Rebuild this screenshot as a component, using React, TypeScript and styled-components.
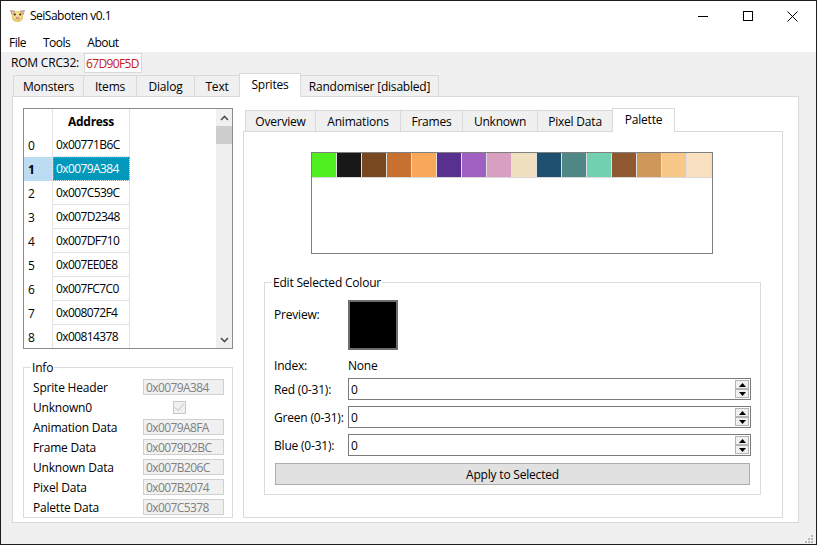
import React from "react";
import styled, { createGlobalStyle } from "styled-components";

const Global = createGlobalStyle`
  html, body { margin: 0; padding: 0; background: #f0f0f0; }
  * { box-sizing: border-box; }
`;

const Win = styled.div`
  position: relative;
  width: 817px; height: 545px; border: 1px solid #1d1d1d; background: #f0f0f0;
  font-family: "Open Sans", "Noto Sans", sans-serif; font-size: 12px; color: #000;
  display: flex; flex-direction: column; overflow: hidden; letter-spacing: -0.2px;
`;
const TitleBar = styled.div`
  height: 30px; background: #fff; display: flex; align-items: center; padding: 0 1px 0 9px; flex: none;
`;
const TitleText = styled.span`margin: -2px 0 0 5px; flex: 1; letter-spacing: -0.5px;`;
const WinBtn = styled.div`width: 45px; height: 30px; display: flex; align-items: center; justify-content: center;`;
const MenuBar = styled.div`
  height: 21px; background: #fff; display: flex; align-items: center; flex: none; padding: 2px 0 0 8px; gap: 17px; letter-spacing: -0.5px;
`;
const RomRow = styled.div`
  height: 21px; display: flex; align-items: flex-end; padding-left: 10px; gap: 5px; flex: none;
`;
const RomLabel = styled.span`line-height: 20px;`;
const RomInput = styled.div`
  width: 58px; height: 20px; background: #fff; border: 1px solid #d9d9d9; color: #c82018; display: flex; align-items: center; padding-left: 1px; letter-spacing: -0.65px;
`;
const TabRow = styled.div<{ $left: number }>`
  display: flex; align-items: flex-end; height: 24px; flex: none; padding-left: ${p => p.$left}px; position: relative; z-index: 1;
`;
const Tab = styled.div<{ $w: number; $active?: boolean }>`
  width: ${p => p.$w}px; height: ${p => (p.$active ? 24 : 22)}px;
  background: ${p => (p.$active ? "#fff" : "#f0f0f0")};
  border: 1px solid #d9d9d9; border-bottom: ${p => (p.$active ? "none" : "1px solid #d9d9d9")};
  margin-right: -1px; display: flex; align-items: center; justify-content: center; flex: none;
  padding-bottom: ${p => (p.$active ? 2 : 0)}px;
`;
const Panel = styled.div`
  margin: -1px 0 0 11px; width: 787px; height: 427px; background: #fff; border: 1px solid #d9d9d9;
  padding: 11px 10px 0 10px; display: flex; gap: 10px; flex: none;
`;
const LeftCol = styled.div`width: 210px; display: flex; flex-direction: column; flex: none;`;
const TableBox = styled.div`
  height: 241px; border: 1px solid #8a8a8a; background: #fff; display: flex; overflow: hidden; flex: none;
`;
const TableGrid = styled.div`
  width: 192px; flex: none; display: grid; grid-template-columns: 29px 77px; grid-auto-rows: 24px;
`;
const HeadCorner = styled.div`border-right: 1px solid #e2e2e2;`;
const HeadCell = styled.div`
  border-right: 1px solid #e2e2e2; font-weight: 700; display: flex; align-items: center; justify-content: center; letter-spacing: -0.3px;
`;
const RowHead = styled.div<{ $sel?: boolean }>`
  background: ${p => (p.$sel ? "#bcdcf4" : "#fff")}; font-weight: ${p => (p.$sel ? 700 : 400)};
  border-right: 1px solid #e2e2e2; display: flex; align-items: center; padding-left: 4px;
`;
const Cell = styled.div<{ $sel?: boolean }>`
  background: ${p => (p.$sel ? "#0099bb" : "#fff")}; color: ${p => (p.$sel ? "#fff" : "#000")};
  border-right: 1px solid #e2e2e2; border-bottom: 1px solid #e2e2e2; display: flex; align-items: center; padding-left: 3px;
  outline: ${p => (p.$sel ? "1px dotted #e8865a" : "none")}; outline-offset: -1px; letter-spacing: -0.6px;
`;
const Scroll = styled.div`
  width: 16px; margin-left: auto; flex: none; background: #f0f0f0; display: flex; flex-direction: column;
`;
const ScrollBtn = styled.div`height: 17px; display: flex; align-items: center; justify-content: center; flex: none;`;
const Thumb = styled.div`height: 18px; background: #cdcdcd; flex: none;`;
const ScrollSpace = styled.div`flex: 1;`;
const Group = styled.div<{ $h: number; $pad: string; $mt: number }>`
  position: relative; height: ${p => p.$h}px; border: 1px solid #dcdcdc; padding: ${p => p.$pad}; margin-top: ${p => p.$mt}px; flex: none;
`;
const Legend = styled.span`
  position: absolute; top: -8px; left: 7px; background: #fff; padding: 0 1px; line-height: 16px;
`;
const InfoRow = styled.div`
  height: 20px; display: grid; grid-template-columns: 110px 81px; align-items: center; padding-left: 9px;
`;
const InfoInput = styled.div`
  width: 81px; height: 16px; background: #f0f0f0; border: 1px solid #d0d0d0; color: #808080; display: flex; align-items: center; padding-left: 2px; letter-spacing: -0.6px;
`;
const CheckHolder = styled.div`display: flex; width: 81px; padding-left: 30px;`;
const Check = styled.div`
  width: 13px; height: 13px; border: 1px solid #c8c8c8; background: #f0f0f0; display: flex; align-items: center; justify-content: center;
`;
const RightCol = styled.div`width: 540px; display: flex; flex-direction: column;`;
const InnerPanel = styled.div`
  margin-top: -1px; width: 540px; height: 387px; border: 1px solid #d9d9d9; background: #fff; padding: 20px 21px 0 20px; flex: none;
`;
const PaletteBox = styled.div`
  width: 402px; height: 102px; margin-left: 47px; border: 1px solid #808080; background: #fff; flex: none;
`;
const SwatchRow = styled.div`display: flex; height: 25px; border-bottom: 1px solid #d9d9d9;`;
const Swatch = styled.div<{ $c: string }>`
  width: 25px; height: 24px; background: ${p => p.$c}; border-right: 1px solid #e0e0e0; flex: none;
`;
const EditRow = styled.div<{ $h: number; $mt?: number }>`
  display: grid; grid-template-columns: 74px 1fr; align-items: center; height: ${p => p.$h}px; padding-left: 9px;
  margin-top: ${p => p.$mt ?? 0}px;
`;
const PreviewSquare = styled.div`width: 50px; height: 50px; background: #000; border: 2px solid #6e6e6e;`;
const PreviewLabel = styled.span`align-self: start; padding-top: 6px;`;
const Spin = styled.div`
  width: 403px; height: 22px; border: 1px solid #7a7a7a; background: #fff; display: flex; align-items: center; padding-left: 2px; justify-content: space-between;
`;
const SpinBtns = styled.div`display: flex; flex-direction: column; width: 14px; height: 18px; margin-right: 1px;`;
const SpinBtn = styled.div`
  height: 9px; border: 1px solid #b4b4b4; background: #f0f0f0; display: flex; align-items: center; justify-content: center;
`;
const ApplyBtn = styled.div`
  margin: 7px 0 0 10px; width: 475px; height: 22px; background: #e1e1e1; border: 1px solid #adadad; display: flex; align-items: center; justify-content: center;
`;
const Grip = styled.svg`position: absolute; right: 2px; bottom: 1px;`;

const UpTri = () => <svg width="7" height="4" viewBox="0 0 7 4"><path d="M3.5 0L7 4H0Z" fill="#000" /></svg>;
const DownTri = () => <svg width="7" height="4" viewBox="0 0 7 4"><path d="M3.5 4L7 0H0Z" fill="#000" /></svg>;

const Pig = () => (
  <svg width="15" height="14" viewBox="0 0 15 14">
    <path d="M0.5 1.5L5 2L2 6Z" fill="#e8b0a8" stroke="#8a7a70" strokeWidth=".5" />
    <path d="M14.5 1.5L10 2L13 6Z" fill="#e8b0a8" stroke="#8a7a70" strokeWidth=".5" />
    <ellipse cx="7.5" cy="7.5" rx="5.7" ry="5.5" fill="#e8c860" />
    <ellipse cx="7.5" cy="7" rx="4.2" ry="3.8" fill="#f6e09a" />
    <circle cx="4.8" cy="5.5" r="1" fill="#2a1a10" />
    <circle cx="10.2" cy="5.5" r="1" fill="#2a1a10" />
    <ellipse cx="7.5" cy="9" rx="2.6" ry="1.8" fill="#eab8a0" />
    <circle cx="6.5" cy="9" r="0.5" fill="#6a4030" />
    <circle cx="8.5" cy="9" r="0.5" fill="#6a4030" />
  </svg>
);

const addrs = ["0x00771B6C", "0x0079A384", "0x007C539C", "0x007D2348", "0x007DF710", "0x007EE0E8", "0x007FC7C0", "0x008072F4", "0x00814378"];
const info: [string, string | null][] = [
  ["Sprite Header", "0x0079A384"], ["Unknown0", null], ["Animation Data", "0x0079A8FA"], ["Frame Data", "0x0079D2BC"],
  ["Unknown Data", "0x007B206C"], ["Pixel Data", "0x007B2074"], ["Palette Data", "0x007C5378"],
];
const palette = ["#50f020", "#181818", "#784820", "#c87030", "#f8a858", "#583090", "#a060c0", "#d8a0c0", "#f0e0c0", "#205070", "#508888", "#70d0b0", "#905830", "#d09858", "#f8c888", "#f8e0c0"];
const mainTabs: [string, number][] = [["Monsters", 71], ["Items", 54], ["Dialog", 59], ["Text", 46]];
const subTabs: [string, number][] = [["Overview", 71], ["Animations", 86], ["Frames", 63], ["Unknown", 76], ["Pixel Data", 76]];

export default function App() {
  return (
    <Win>
      <Global />
      <TitleBar>
        <Pig />
        <TitleText>SeiSaboten v0.1</TitleText>
        <WinBtn><svg width="10" height="10" viewBox="0 0 10 10"><path d="M0 5.5H10" stroke="#000" /></svg></WinBtn>
        <WinBtn><svg width="10" height="10" viewBox="0 0 10 10"><rect x=".5" y=".5" width="9" height="9" fill="none" stroke="#000" /></svg></WinBtn>
        <WinBtn><svg width="11" height="11" viewBox="0 0 11 11"><path d="M.5 .5L10.5 10.5M10.5 .5L.5 10.5" stroke="#000" /></svg></WinBtn>
      </TitleBar>
      <MenuBar><span>File</span><span>Tools</span><span>About</span></MenuBar>
      <RomRow><RomLabel>ROM CRC32:</RomLabel><RomInput>67D90F5D</RomInput></RomRow>
      <TabRow $left={12}>
        {mainTabs.map(([t, w]) => <Tab key={t} $w={w}>{t}</Tab>)}
        <Tab $w={62} $active>Sprites</Tab>
        <Tab $w={139}>Randomiser [disabled]</Tab>
      </TabRow>
      <Panel>
        <LeftCol>
          <TableBox>
            <TableGrid>
              <HeadCorner />
              <HeadCell>Address</HeadCell>
              {addrs.map((a, i) => (
                <React.Fragment key={a}>
                  <RowHead $sel={i === 1}>{i}</RowHead>
                  <Cell $sel={i === 1}>{a}</Cell>
                </React.Fragment>
              ))}
            </TableGrid>
            <Scroll>
              <ScrollBtn><svg width="9" height="6" viewBox="0 0 9 6"><path d="M1 5L4.5 1.5L8 5" fill="none" stroke="#505050" strokeWidth="1.6" /></svg></ScrollBtn>
              <Thumb />
              <ScrollSpace />
              <ScrollBtn><svg width="9" height="6" viewBox="0 0 9 6"><path d="M1 1L4.5 4.5L8 1" fill="none" stroke="#505050" strokeWidth="1.6" /></svg></ScrollBtn>
            </Scroll>
          </TableBox>
          <Group $h={151} $pad="9px 0 0 0" $mt={18}>
            <Legend>Info</Legend>
            {info.map(([l, v]) => (
              <InfoRow key={l}>
                <span>{l}</span>
                {v ? <InfoInput>{v}</InfoInput> : (
                  <CheckHolder><Check><svg width="11" height="9" viewBox="0 0 11 9"><path d="M1 4.5L4 7.5L10 1" fill="none" stroke="#c0c0c0" /></svg></Check></CheckHolder>
                )}
              </InfoRow>
            ))}
          </Group>
        </LeftCol>
        <RightCol>
          <TabRow $left={2}>
            {subTabs.map(([t, w]) => <Tab key={t} $w={w}>{t}</Tab>)}
            <Tab $w={63} $active>Palette</Tab>
          </TabRow>
          <InnerPanel>
            <PaletteBox>
              <SwatchRow>{palette.map((c, i) => <Swatch key={i} $c={c} />)}</SwatchRow>
            </PaletteBox>
            <Group $h={213} $pad="17px 0 0 0" $mt={28}>
              <Legend>Edit Selected Colour</Legend>
              <EditRow $h={50}><PreviewLabel>Preview:</PreviewLabel><PreviewSquare /></EditRow>
              <EditRow $h={20} $mt={5}><span>Index:</span><span>None</span></EditRow>
              {["Red (0-31):", "Green (0-31):", "Blue (0-31):"].map((l, i) => (
                <EditRow key={l} $h={22} $mt={i === 0 ? 3 : 6}>
                  <span>{l}</span>
                  <Spin>
                    <span>0</span>
                    <SpinBtns>
                      <SpinBtn><UpTri /></SpinBtn>
                      <SpinBtn><DownTri /></SpinBtn>
                    </SpinBtns>
                  </Spin>
                </EditRow>
              ))}
              <ApplyBtn>Apply to Selected</ApplyBtn>
            </Group>
          </InnerPanel>
        </RightCol>
      </Panel>
      <Grip width="9" height="8" viewBox="0 0 9 8" fill="#b8b8b8">
        <rect x="6" y="0" width="2" height="2" />
        <rect x="3" y="3" width="2" height="2" />
        <rect x="6" y="3" width="2" height="2" />
        <rect x="0" y="6" width="2" height="2" />
        <rect x="3" y="6" width="2" height="2" />
        <rect x="6" y="6" width="2" height="2" />
      </Grip>
    </Win>
  );
}
